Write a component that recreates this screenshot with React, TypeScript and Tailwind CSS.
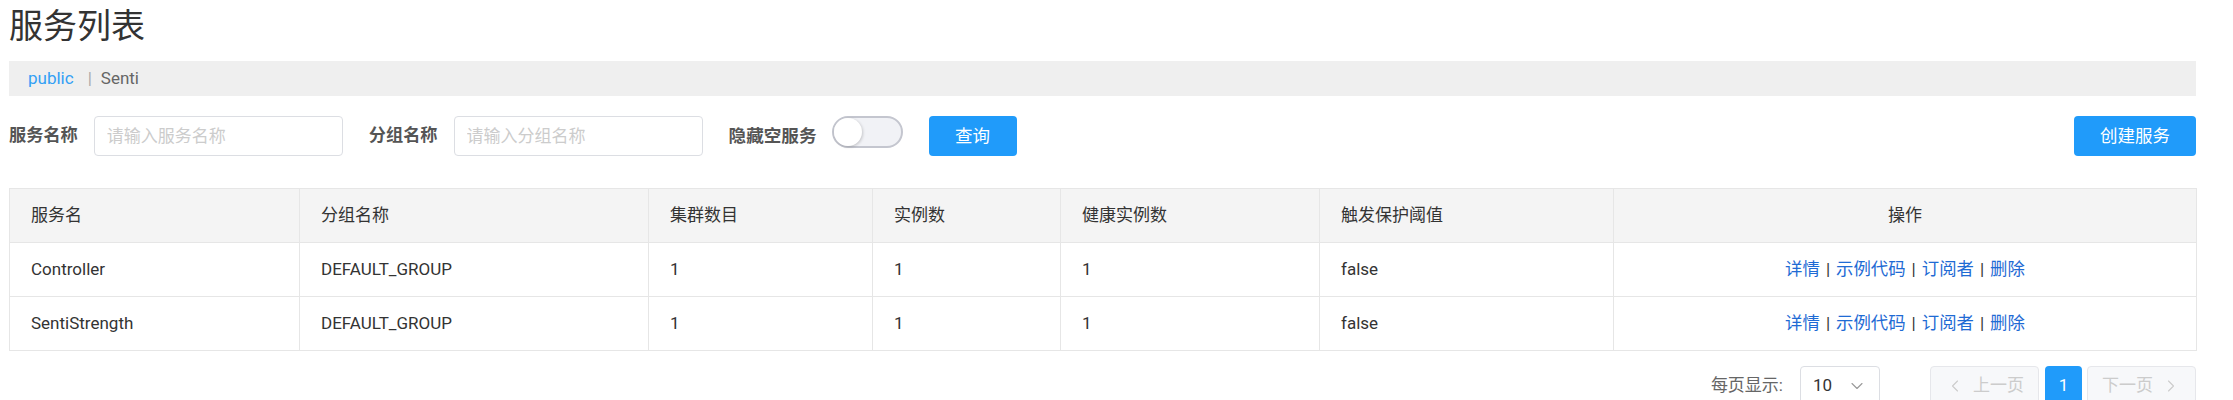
import { ChevronDown, ChevronLeft, ChevronRight } from "lucide-react";

const columns = [
  { title: "服务名", width: 290 },
  { title: "分组名称", width: 349 },
  { title: "集群数目", width: 224 },
  { title: "实例数", width: 188 },
  { title: "健康实例数", width: 259 },
  { title: "触发保护阈值", width: 294 },
  { title: "操作", width: 583 },
];

const services = [
  { name: "Controller", group: "DEFAULT_GROUP", clusters: 1, instances: 1, healthy: 1, threshold: "false" },
  { name: "SentiStrength", group: "DEFAULT_GROUP", clusters: 1, instances: 1, healthy: 1, threshold: "false" },
];

const actions = ["详情", "示例代码", "订阅者", "删除"];

function Field({ label, placeholder }: { label: string; placeholder: string }) {
  return (
    <>
      <div className="flex h-[40px] items-center text-[17.2px] font-bold text-[#555]">{label}</div>
      <input
        className="ml-[16px] h-[40px] w-[249px] rounded-[4px] border border-[#dcdee3] bg-white px-[12px] text-[17px] text-[#333] outline-none placeholder:text-[#ccc]"
        placeholder={placeholder}
      />
    </>
  );
}

export default function App() {
  return (
    <div className="w-[2196px] bg-white pl-[9px] font-[Roboto,'Noto_Sans_CJK_SC',sans-serif] text-[#333]">
      <h1 className="pt-[9px] text-[34px] leading-[34px] font-normal text-[#333]">服务列表</h1>

      <div className="mt-[18px] flex h-[35px] items-center bg-[#efefef] pl-[19px] text-[17px]">
        <span className="text-[#33a0f5]">public</span>
        <span className="ml-[14px] mr-[9px] text-[#aaa]">|</span>
        <span className="text-[#666]">Senti</span>
      </div>

      <div className="mt-[20px] flex items-start">
        <Field label="服务名称" placeholder="请输入服务名称" />
        <div className="ml-[26px] flex">
          <Field label="分组名称" placeholder="请输入分组名称" />
        </div>
        <div className="ml-[26px] flex h-[40px] items-center text-[17.6px] font-bold text-[#555]">隐藏空服务</div>
        <div className="ml-[15px] flex h-[32px] w-[71px] items-center rounded-full border-2 border-[#c4c6cf] bg-[#f1f2f6]">
          <div className="h-[28px] w-[28px] rounded-full bg-white shadow-[1px_1px_3px_rgba(0,0,0,0.18)]" />
        </div>
        <button className="ml-[26px] h-[40px] w-[88px] rounded-[4px] bg-[#209bfa] text-[17.5px] text-white">查询</button>
        <button className="ml-auto h-[40px] w-[122px] rounded-[4px] bg-[#209bfa] text-[17.5px] text-white">创建服务</button>
      </div>

      <table className="mt-[32px] w-full table-fixed border-collapse text-[17px]">
        <colgroup>
          {columns.map((c) => (
            <col key={c.title} style={{ width: c.width }} />
          ))}
        </colgroup>
        <thead>
          <tr className="bg-[#f4f4f4]">
            {columns.map((c, i) => (
              <th
                key={c.title}
                className={`h-[54px] border border-[#e6e6e6] px-[21px] font-normal text-[#333] ${
                  i === columns.length - 1 ? "text-center" : "text-left"
                }`}
              >
                {c.title}
              </th>
            ))}
          </tr>
        </thead>
        <tbody>
          {services.map((s) => (
            <tr key={s.name}>
              <td className="h-[54px] border border-[#e6e6e6] px-[21px]">{s.name}</td>
              <td className="border border-[#e6e6e6] px-[21px]">{s.group}</td>
              <td className="border border-[#e6e6e6] px-[21px]">{s.clusters}</td>
              <td className="border border-[#e6e6e6] px-[21px]">{s.instances}</td>
              <td className="border border-[#e6e6e6] px-[21px]">{s.healthy}</td>
              <td className="border border-[#e6e6e6] px-[21px]">{s.threshold}</td>
              <td className="border border-[#e6e6e6] px-[21px] text-center">
                {actions.map((a, i) => (
                  <span key={a}>
                    {i > 0 && <span className="mx-[6px] text-[#333]">|</span>}
                    <a className="cursor-pointer text-[17.4px] text-[#1f6bd4]">{a}</a>
                  </span>
                ))}
              </td>
            </tr>
          ))}
        </tbody>
      </table>

      <div className="mt-[15px] flex items-center justify-end text-[17px]">
        <span className="text-[#666]">每页显示:</span>
        <div className="ml-[17px] flex h-[40px] w-[80px] items-center justify-between rounded-[4px] border border-[#dcdee3] pl-[12px] pr-[12px] text-[#333]">
          <span>10</span>
          <ChevronDown size={20} strokeWidth={1.3} className="text-[#999]" />
        </div>
        <button className="ml-[50px] flex h-[40px] w-[109px] items-center justify-center gap-[8px] rounded-[4px] border border-[#e6e7eb] bg-[#f7f8fa] text-[#ccc]">
          <ChevronLeft size={20} strokeWidth={1.3} />
          <span>上一页</span>
        </button>
        <button className="ml-[6px] h-[40px] w-[37px] rounded-[4px] bg-[#209bfa] text-white">1</button>
        <button className="ml-[5px] flex h-[40px] w-[109px] items-center justify-center gap-[8px] rounded-[4px] border border-[#e6e7eb] bg-[#f7f8fa] text-[#ccc]">
          <span>下一页</span>
          <ChevronRight size={20} strokeWidth={1.3} />
        </button>
      </div>
    </div>
  );
}
